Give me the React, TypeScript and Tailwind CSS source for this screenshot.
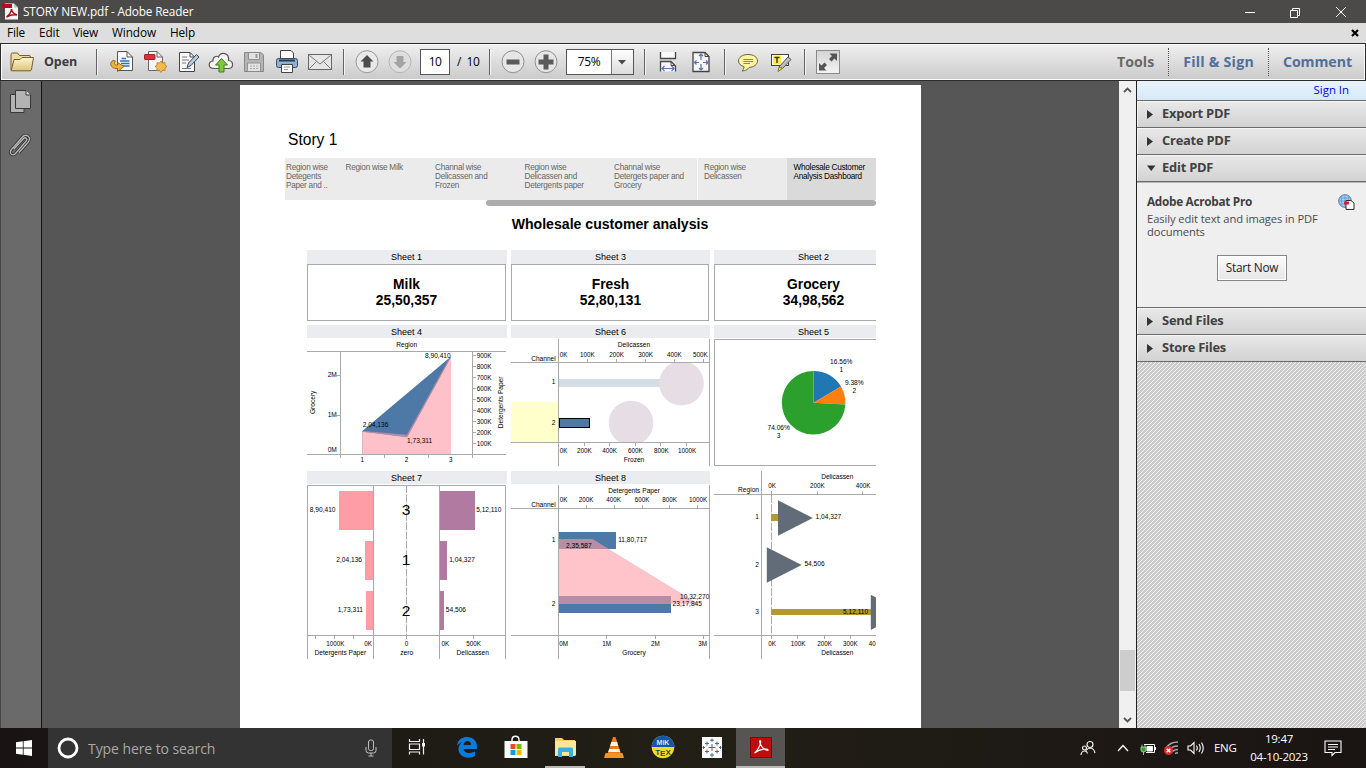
import React from "react";

const UI = "font-['Open_Sans','Noto_Sans',sans-serif]";
const ARIAL = "font-['Liberation_Sans',sans-serif]";
const GRAY = "#a9a9a9";

/* ---------- chart helpers ---------- */
type TProps = { x: number; y: number; children: string; a?: "start" | "middle" | "end"; s?: number; rot?: boolean };
function T({ x, y, children, a = "middle", s = 6.6, rot }: TProps) {
  return (
    <text x={x} y={y} textAnchor={a} fontSize={s} fill="#000" transform={rot ? `rotate(-90 ${x} ${y})` : undefined}>
      {children}
    </text>
  );
}
function L({ d, dash }: { d: string; dash?: string }) {
  return <path d={d} stroke={GRAY} strokeWidth="1" fill="none" strokeDasharray={dash} />;
}
function Axis({ items, y, s = 6.3 }: { items: [number, string][]; y: number; s?: number }) {
  return (
    <>
      {items.map(([x, t]) => (
        <T key={t + x} x={x} y={y} s={s}>{t}</T>
      ))}
    </>
  );
}

function Chart4() {
  const right = ["900K", "800K", "700K", "600K", "500K", "400K", "300K", "200K", "100K"];
  return (
    <svg width="200" height="127" viewBox="307 339 200 127" className="block">
      <path d="M362.3 431L451 356.5V454H362.3Z" fill="#4e79a7" />
      <path d="M362.3 431.5L407 437L451 357V454H362.3Z" fill="#ffc1c9" />
      <path d="M362.3 431.3L407 435.2L450.5 357L407 437Z" fill="#b98ea8" stroke="#b98ea8" strokeWidth="0.6" />
      <L d="M307 351.5H506M307 454.5H506M340.5 351V458M472.5 351V458M384.5 454V458M428.5 454V458M336.5 375.5H340M336.5 415.5H340" />
      {right.map((t, i) => (
        <g key={t}>
          <L d={`M473 ${355 + i * 11}.5H476`} />
          <T x={476.7} y={357.7 + i * 11} a="start" s={6.4}>{t}</T>
        </g>
      ))}
      <T x={406.7} y={347}>Region</T>
      <T x={425} y={357.8} a="start">8,90,410</T>
      <T x={362.7} y={427} a="start">2,04,136</T>
      <T x={407} y={442.8} a="start">1,73,311</T>
      <T x={336.8} y={377.3} a="end">2M</T>
      <T x={336.8} y={417.3} a="end">1M</T>
      <T x={336.8} y={452} a="end">0M</T>
      <Axis y={461.8} items={[[362.3, "1"], [406.5, "2"], [450.7, "3"]]} />
      <T x={315} y={402.3} rot>Grocery</T>
      <T x={502.6} y={402.3} rot>Detergents Paper</T>
    </svg>
  );
}

function Chart6() {
  return (
    <svg width="199" height="127" viewBox="511 339 199 127" className="block">
      <rect x="511" y="402" width="47" height="40" fill="#ffffcc" />
      <rect x="559" y="379" width="108" height="8" fill="#d4dde4" />
      <clipPath id="pane6"><rect x="559" y="363" width="150" height="79" /></clipPath>
      <g clipPath="url(#pane6)" fill="#e6dde5">
        <circle cx="681.5" cy="383.2" r="22.3" />
        <circle cx="631" cy="423" r="22.3" />
      </g>
      <rect x="559.5" y="418.5" width="30" height="9" fill="#4e79a7" stroke="#000" />
      <L d="M558.5 339V466M709.5 339V466M511 362.5H710M511 442.5H710" />
      <L d="M587.5 359V362M616.5 359V362M645.5 359V362M674.5 359V362M703.5 359V362M584.5 443V446M609.5 443V446M635.5 443V446M660.5 443V446M686.5 443V446" />
      <T x={634} y={347}>Delicassen</T>
      <Axis y={357} items={[[563.7, "0K"], [587.3, "100K"], [616.7, "200K"], [645.7, "300K"], [674.3, "400K"], [700.3, "500K"]]} />
      <T x={555.7} y={361} a="end">Channel</T>
      <T x={555.5} y={384} a="end">1</T>
      <T x={555.5} y={425} a="end">2</T>
      <Axis y={453} items={[[563.7, "0K"], [584.3, "200K"], [609.7, "400K"], [635.3, "600K"], [661.3, "800K"], [687, "1000K"]]} />
      <T x={634} y={462}>Frozen</T>
    </svg>
  );
}

function Chart5() {
  const c = [813.6, 402.7];
  const r = 31.8;
  const pt = (f: number) => `${c[0] + r * Math.sin(f * 2 * Math.PI)} ${c[1] - r * Math.cos(f * 2 * Math.PI)}`;
  const slice = (f0: number, f1: number) => `M${c[0]} ${c[1]}L${pt(f0)}A${r} ${r} 0 ${f1 - f0 > 0.5 ? 1 : 0} 1 ${pt(f1)}Z`;
  return (
    <svg width="162" height="127" viewBox="714 339 162 127" className="block">
      <L d="M876 339.5H714.5V465.5H876" />
      <path d={slice(0, 0.1656)} fill="#1f77b4" />
      <path d={slice(0.1656, 0.2594)} fill="#ff7f0e" />
      <path d={slice(0.2594, 0.9999)} fill="#2ca02c" />
      <T x={841.3} y={364}>16.56%</T>
      <T x={841.3} y={371.8}>1</T>
      <T x={854.3} y={385}>9.38%</T>
      <T x={854.3} y={392.8}>2</T>
      <T x={778.7} y={430}>74.06%</T>
      <T x={778.7} y={437.8}>3</T>
    </svg>
  );
}

function Chart7() {
  return (
    <svg width="200" height="174" viewBox="307 485 200 174" className="block">
      <g fill="#ff9da7">
        <rect x="339" y="491" width="34" height="39" />
        <rect x="365" y="541" width="8" height="39" />
        <rect x="366" y="591" width="7" height="39" />
      </g>
      <g fill="#b07aa1">
        <rect x="440" y="491" width="35" height="39" />
        <rect x="440" y="541" width="7" height="39" />
        <rect x="440" y="591" width="4" height="39" />
      </g>
      <L d="M406.5 485V635" dash="8 1.3" />
      <L d="M307.5 659V485.5H505.5V659M373.5 485V659M439.5 485V659M307 635.5H506M315.5 636V639M334.5 636V639M353.5 636V639M406.5 636V639M473.5 636V639" />
      <T x={335.5} y={512} a="end">8,90,410</T>
      <T x={362} y={562} a="end">2,04,136</T>
      <T x={363} y={612} a="end">1,73,311</T>
      <T x={476.2} y={512} a="start">5,12,110</T>
      <T x={449.2} y={562} a="start">1,04,327</T>
      <T x={445.8} y={612} a="start">54,506</T>
      <T x={406} y={514.9} s={15.5}>3</T>
      <T x={406} y={565} s={15.5}>1</T>
      <T x={406} y={616} s={15.5}>2</T>
      <Axis y={646} items={[[335.3, "1000K"], [368, "0K"], [406.5, "0"], [445.3, "0K"], [473.7, "500K"]]} />
      <T x={340.3} y={655}>Detergents Paper</T>
      <T x={406.7} y={655}>zero</T>
      <T x={472.7} y={655}>Delicassen</T>
    </svg>
  );
}

function Chart8() {
  return (
    <svg width="199" height="174" viewBox="511 485 199 174" className="block">
      <rect x="559" y="532" width="57" height="17" fill="#4e79a7" />
      <rect x="559" y="596" width="112" height="17" fill="#4e79a7" />
      <path d="M559 539.5H592.5L698 604H559Z" fill="#ff9da7" fillOpacity="0.6" />
      <path d="M559 539.5H592.5L698 604" fill="none" stroke="#ff9da7" strokeOpacity="0.5" strokeWidth="0.8" />
      <L d="M558.5 485V659M709.5 485V659M511 508.5H710M511 635.5H710" />
      <L d="M586.5 505V508M614.5 505V508M642.5 505V508M669.5 505V508M697.5 505V508M606.5 636V639M655.5 636V639M703.5 636V639" />
      <T x={634} y={493.3}>Detergents Paper</T>
      <Axis y={502} items={[[563.7, "0K"], [586, "200K"], [613.7, "400K"], [642, "600K"], [669.7, "800K"], [698, "1000K"]]} />
      <T x={555.7} y={507} a="end">Channel</T>
      <T x={555.5} y={542} a="end">1</T>
      <T x={555.5} y={606} a="end">2</T>
      <T x={566} y={547.8} a="start">2,35,587</T>
      <T x={618.2} y={542} a="start">11,80,717</T>
      <T x={680} y={599} a="start">10,32,270</T>
      <T x={672.6} y={606} a="start">23,17,845</T>
      <Axis y={646} items={[[563.7, "0M"], [606.7, "1M"], [655.3, "2M"], [702.6, "3M"]]} />
      <T x={634} y={655}>Grocery</T>
    </svg>
  );
}

function Chart9() {
  return (
    <svg width="162" height="188" viewBox="714 471 162 188" className="block">
      <L d="M771.5 495V635" dash="8 1.3" />
      <rect x="771" y="514" width="8" height="7" fill="#b6992d" />
      <rect x="771" y="609" width="100" height="6" fill="#b6992d" />
      <g fill="#616c78">
        <path d="M778 500.3L812.8 518L778 535.7Z" />
        <path d="M766.8 547.3L801.7 565L766.8 582.7Z" />
        <path d="M870.8 594.7L905 612.3L870.8 630Z" />
      </g>
      <L d="M761.5 471V659M714 494.5H876M714 635.5H876M771.5 491V494M817.5 491V494M862.5 491V494M771.5 636V639M797.5 636V639M824.5 636V639M850.5 636V639" />
      <T x={837.3} y={479}>Delicassen</T>
      <Axis y={488} items={[[772, "0K"], [817.3, "200K"], [863, "400K"]]} />
      <T x={759} y={492} a="end">Region</T>
      <T x={759} y={519} a="end">1</T>
      <T x={759} y={567} a="end">2</T>
      <T x={759} y={614} a="end">3</T>
      <T x={815.6} y={519.3} a="start">1,04,327</T>
      <T x={804.4} y={566} a="start">54,506</T>
      <T x={843} y={614} a="start">5,12,110</T>
      <Axis y={646} items={[[772, "0K"], [798, "100K"], [824.5, "200K"], [850.3, "300K"], [872.3, "40"]]} />
      <T x={837.3} y={655}>Delicassen</T>
    </svg>
  );
}

/* ---------- document page ---------- */
function SheetHead({ children, tall }: { children: string; tall?: boolean }) {
  return (
    <div className={`bg-[#ebecf0] overflow-hidden ${tall ? "h-[14px]" : "h-[13px]"}`}>
      <div className="w-[199px] text-center text-[9px] leading-[14px] text-black">{children}</div>
    </div>
  );
}
function Kpi({ head, name, value, open }: { head: string; name: string; value: string; open?: boolean }) {
  return (
    <div className="overflow-hidden">
      <SheetHead tall>{head}</SheetHead>
      <div className={`h-[57px] border-[#a9a9a9] ${open ? "border-y border-l" : "mr-px border"}`}>
        <div className="w-[197px] pt-3 text-center text-[13.8px] font-bold leading-4 text-black">
          <div>{name}</div>
          <div>{value}</div>
        </div>
      </div>
    </div>
  );
}
const tabs: { w: string; lines: string[] }[] = [
  { w: "w-[54px] pl-px", lines: ["Region wise", "Detegents", "Paper and .."] },
  { w: "w-[90px] pl-[6.5px]", lines: ["Region wise Milk"] },
  { w: "w-[89px] pl-[6px]", lines: ["Channal wise", "Delicassen and", "Frozen"] },
  { w: "w-[90px] pl-[6.5px]", lines: ["Region wise", "Delicassen and", "Detergents paper"] },
  { w: "w-[89px] pl-[6px]", lines: ["Channal wise", "Detergets paper and", "Grocery"] },
  { w: "w-[90px] pl-[6px] border-l border-white", lines: ["Region wise", "Delicassen"] },
  { w: "w-[89px] pl-[6.5px] bg-[#dadada] text-black", lines: ["Wholesale Customer", "Analysis Dashboard"] },
];
function Page() {
  return (
    <div className={`mt-1 ml-[198px] w-[681px] h-[643px] shrink-0 bg-white pl-[45px] pt-[46px] ${ARIAL}`}>
      <div className="h-[27px] pl-[3px] text-[15.6px] leading-[18px] text-black">Story 1</div>
      <div className="flex h-[42px] w-[591px] overflow-hidden bg-[#ebebeb] text-[#666]">
        {tabs.map((t, i) => (
          <div key={i} className={`${t.w} shrink-0 whitespace-nowrap pt-[5px] text-[8.2px] leading-[9px] tracking-[-0.25px]`}>
            {t.lines.map((l) => (
              <div key={l}>{l}</div>
            ))}
          </div>
        ))}
      </div>
      <div className="ml-[201px] h-1.5 w-[390px] rounded-full bg-[#adadad]" />
      <div className="ml-[22px] mt-2.5 h-[34px] w-[606px] text-center text-[14.1px] font-bold leading-4 text-black">Wholesale customer analysis</div>
      <div className="ml-[22px] grid w-[569px] grid-cols-[200px_199px_162px] gap-x-1">
        <Kpi head="Sheet 1" name="Milk" value="25,50,357" />
        <Kpi head="Sheet 3" name="Fresh" value="52,80,131" />
        <Kpi head="Sheet 2" name="Grocery" value="34,98,562" open />
        <div className="mt-1"><SheetHead>Sheet 4</SheetHead><div className="pt-px"><Chart4 /></div></div>
        <div className="mt-1"><SheetHead>Sheet 6</SheetHead><div className="pt-px"><Chart6 /></div></div>
        <div className="mt-1"><SheetHead>Sheet 5</SheetHead><div className="pt-px"><Chart5 /></div></div>
        <div className="mt-[5px]"><SheetHead>Sheet 7</SheetHead><div className="pt-px"><Chart7 /></div></div>
        <div className="mt-[5px]"><SheetHead>Sheet 8</SheetHead><div className="pt-px"><Chart8 /></div></div>
        <div className="mt-[5px]"><Chart9 /></div>
      </div>
    </div>
  );
}

/* ---------- toolbar ---------- */
function Sep() {
  return <div className="h-[26px] w-0.5 shrink-0 border-l border-[#636363] bg-[#f4f4f4]" />;
}
function Ico({ children }: { children: React.ReactNode }) {
  return (
    <div className="flex w-[33px] shrink-0 justify-center">
      <svg width="26" height="26" viewBox="0 0 26 26" fill="none">{children}</svg>
    </div>
  );
}
function Toolbar() {
  return (
    <div className="box-border flex h-[38px] shrink-0 items-center border border-[#2b2b2b] bg-linear-to-b from-[#f0f0f0] to-[#cacaca] shadow-[inset_0_0_0_1px_#fafafa]">
      <div className="flex w-[95px] shrink-0 items-center pl-[8px]">
        <svg width="26" height="22" viewBox="0 0 26 22">
          <defs>
            <linearGradient id="fold" x2="0" y2="1"><stop stopColor="#fdf5d4" /><stop offset="1" stopColor="#dfc476" /></linearGradient>
          </defs>
          <path d="M2 19V3.5Q2 2 3.5 2H8.5L10.5 4.5H20Q21.5 4.5 21.5 6V9" fill="#eedda0" stroke="#735f31" />
          <path d="M2.2 19.8L5 8.5H11L13 6.5H24.5L22.5 18.5Q22.2 19.8 21 19.8Z" fill="url(#fold)" stroke="#735f31" strokeLinejoin="round" />
        </svg>
        <span className="ml-[9px] text-[12.5px] font-bold tracking-[-0.1px] text-[#3b3b3b]">Open</span>
      </div>
      <Sep />
      <div className="flex w-[245px] shrink-0 pl-[7.5px]">
        <Ico>
          <path d="M8.5 2.5H18L23.5 8V21.5H8.5Z" fill="#fbfbfb" stroke="#555" />
          <path d="M18 2.5V8H23.5" stroke="#555" />
          <path d="M12.5 9.5H17M11 12H20.500M12 14.500H20.500M14 17H20.500" stroke="#2f6fc4" strokeWidth="1.3" />
          <path d="M4 11.500C-.5 14 2 20 8.500 19.500V22.500L15 17.500L8.500 13.500V16C5 16.500 4.500 14 6.500 12Z" fill="#f2b53a" stroke="#8a5d10" strokeWidth=".9" />
        </Ico>
        <Ico>
          <path d="M6.500 2.500H15L20.500 8V21.500H6.500Z" fill="#f5f5f5" stroke="#666" />
          <path d="M15 2.500V8H20.500" stroke="#666" />
          <rect x="2.500" y="5.500" width="10.500" height="5" rx=".6" fill="#e0303a" stroke="#a91d26" />
          <path d="M19 12L20.600 14.200L23 13.500L22.900 16L25 17.500L22.900 19L23.200 21.500L20.700 21.200L19 23.500L17.300 21.200L14.800 21.500L15.100 19L13 17.500L15.100 16L15 13.500L17.400 14.200Z" fill="#f4bd49" stroke="#a9761c" strokeWidth=".7" />
        </Ico>
        <Ico>
          <path d="M4.500 3.500H15L19.500 8V22.500H4.500Z" fill="#fafafa" stroke="#444" />
          <path d="M15 3.500V8H19.500" stroke="#444" />
          <path d="M7 8H12M7 11H14M7 14H11M7 19.500H16" stroke="#777" />
          <path d="M12 18.500L13.500 14L21.500 5.500L24 8L16 16.500Z" fill="#b7cbe0" stroke="#39495c" />
        </Ico>
        <Ico>
          <path d="M6 19.500C-.5 19.500 0 12 5 12C4.500 7.500 9 6.500 10.500 8C13 2 21.500 4 20.500 11.500C26 12 26 19.500 20 19.500Z" fill="#f4f4f4" stroke="#555" strokeWidth="1.200" />
          <path d="M13.500 9.500L19.500 16H16V23H11V16H7.500Z" fill="#7dcb3c" stroke="#3e7c14" />
        </Ico>
        <Ico>
          <path d="M3.500 3.500H20L22.500 6V22.500H3.500Z" fill="#b4b4b4" stroke="#888" />
          <path d="M7.500 4V10.500H18.500V4M6.500 22V14H19.500V22" fill="#e2e2e2" stroke="#909090" />
          <path d="M14.500 5H16.500V9H14.500Z" fill="#999" />
          <path d="M9 17H17M9 19.500H17" stroke="#aaa" strokeDasharray="2 1" />
        </Ico>
        <Ico>
          <path d="M6.500 10V1.500H17L19.500 4V10Z" fill="#fdfdfd" stroke="#444" />
          <rect x="2.500" y="9.500" width="21" height="9" rx="2" fill="#8db1d4" stroke="#3c4c5e" />
          <path d="M5 11.500H21" stroke="#2c3947" strokeWidth="2" />
          <path d="M7.500 15.500H18.500V23.500H7.500Z" fill="#fdfdfd" stroke="#444" />
          <path d="M10 18H16M10 20.500H14" stroke="#999" />
        </Ico>
        <Ico>
          <rect x="1.500" y="5.500" width="23" height="15" fill="#e6e6e6" stroke="#666" />
          <path d="M2.500 6.500L13 15L23.500 6.500M2.500 19.500L9.500 12.500M23.500 19.500L16.500 12.500" stroke="#777" />
        </Ico>
      </div>
      <Sep />
      <div className="flex w-[75px] shrink-0 pl-[5px]">
        <Ico>
          <circle cx="13" cy="12.700" r="11" fill="#e9e9e9" stroke="#999" />
          <path d="M13 6L19.500 12.500H16.500V18.500H9.500V12.500H6.500Z" fill="#4c4c4c" />
        </Ico>
        <Ico>
          <circle cx="13" cy="12.700" r="11" fill="#dedede" stroke="#b5b5b5" />
          <path d="M13 19.500L19.500 13H16.500V7H9.500V13H6.500Z" fill="#a3a3a3" />
        </Ico>
      </div>
      <div className="flex h-[26px] w-[30px] shrink-0 items-center justify-center border border-[#555] bg-white text-[12px] tracking-[-0.5px] text-black">10</div>
      <span className="w-[39px] shrink-0 whitespace-pre pl-[7px] text-[12px] tracking-[-0.4px] text-black">/  10</span>
      <Sep />
      <div className="flex w-[75px] shrink-0 pl-[5.500px]">
        <Ico>
          <circle cx="13" cy="12.700" r="11" fill="#e6e6e6" stroke="#909090" />
          <path d="M6.500 10.500H19.500V15.500H6.500Z" fill="#5a5a5a" />
        </Ico>
        <Ico>
          <circle cx="13" cy="12.700" r="11" fill="#e6e6e6" stroke="#909090" />
          <path d="M10.500 5.500H15.500V10.500H20.500V15.500H15.500V20.500H10.500V15.500H5.500V10.500H10.500Z" fill="#5a5a5a" />
        </Ico>
      </div>
      <div className="flex h-[26px] w-[68px] shrink-0 border border-[#555] bg-white">
        <span className="flex w-[45px] items-center justify-center border-r border-[#777] text-[12px] tracking-[-0.4px] text-black">75%</span>
        <span className="flex flex-1 items-center justify-center bg-linear-to-b from-white to-[#dcdcdc]">
          <svg width="9" height="5"><path d="M0 0H8L4 4.500Z" fill="#4a4a4a" /></svg>
        </span>
      </div>
      <div className="w-[10px] shrink-0" />
      <Sep />
      <div className="flex w-[78px] shrink-0 pl-[5.500px]">
        <Ico>
          <path d="M5.500 3H20.500V9.500H5.500Z" fill="#fafafa" />
          <path d="M5.500 3V9.500H20.500V3" stroke="#444" strokeWidth="1.300" />
          <path d="M5.500 22.500V12.500H16L20.500 17V22.500" stroke="#444" strokeWidth="1.300" fill="#f6f6f6" />
          <path d="M16 12.500V16.500H20.500" stroke="#444" />
          <path d="M7 19.500H19M9.500 17L7 19.500L9.500 22M16.500 17L19 19.500L16.500 22" stroke="#5b74ad" strokeWidth="1.200" />
        </Ico>
        <Ico>
          <path d="M5 3.500H17L21 7.500V22.500H5Z" fill="#f6f6f6" stroke="#444" strokeWidth="1.300" />
          <path d="M17 3.500V7.500H21" stroke="#444" />
          <path d="M13 5V11M13 15V21M6.500 13.500H11M15 13.500H20M11 7L13 5L15 7M11 19L13 21L15 19M8.500 11.500L6.500 13.500L8.500 15.500M18 11.500L20 13.500L18 15.500" stroke="#5b74ad" strokeWidth="1.200" />
        </Ico>
      </div>
      <Sep />
      <div className="flex w-[78px] shrink-0 pl-[5px]">
        <Ico>
          <path d="M13 5.500C7 5.500 3.500 8.500 3.500 12C3.500 15 6 17 9 17.500C9 20 8 21 7 22C10 22 13 20.500 14 18.500C19 18 22.500 15.500 22.500 12C22.500 8 18.500 5.500 13 5.500Z" fill="#fdf5a0" stroke="#6a6647" />
          <path d="M8.500 10.500H18M8.500 12.500H18M8.500 14.500H15" stroke="#8e884c" />
        </Ico>
        <Ico>
          <rect x="3.500" y="5.500" width="17" height="11" fill="#fff" stroke="#444" />
          <rect x="5" y="6.500" width="8" height="9" fill="#ffef3a" />
          <path d="M6.500 8.500H11.500M9 8.500V14" stroke="#333" strokeWidth="1.400" />
          <path d="M11 18L20 8L23 10.500L14.500 19.500Z" fill="#bdbdbd" stroke="#555" />
          <path d="M11 18L14.500 19.500L10 22.500Z" fill="#efe544" stroke="#7f7a2a" />
        </Ico>
      </div>
      <Sep />
      <div className="ml-[10px] flex h-6 w-6 shrink-0 items-center justify-center border border-[#8a8a8a] bg-linear-to-b from-[#d4d4d4] to-[#f4f4f4]">
        <svg width="22" height="22" viewBox="0 0 22 22" fill="#555">
          <path d="M12.500 2.500H20V10L17.500 7.500L14.500 10.500L12 8L15 5Z" />
          <path d="M9.500 19.500H2V12L4.500 14.500L7.500 11.500L10 14L7 17Z" />
        </svg>
      </div>
      <div className="ml-auto flex h-full items-center pr-[13px] text-[14.2px] font-bold text-[#4f6f9d]">
        <span className="text-[#6b6865]">Tools</span>
        <span className="ml-[14px] h-7 w-px border-l border-dotted border-[#555]" />
        <span className="ml-[14px] tracking-[0.22px]">Fill &amp; Sign</span>
        <span className="ml-[14px] h-7 w-px border-l border-dotted border-[#555]" />
        <span className="ml-[14px] tracking-[-0.07px]">Comment</span>
      </div>
    </div>
  );
}

/* ---------- right panel ---------- */
function Section({ children, open }: { children: string; open?: boolean }) {
  return (
    <div className="flex h-[27px] shrink-0 items-center border-b border-[#6b6b6b] bg-linear-to-b from-[#e9e9e9] to-[#d2d2d2] shadow-[inset_1px_1px_0_#f5f5f5]">
      <svg width="25" height="12" viewBox="0 0 25 12" fill="#333">
        {open ? <path d="M10 3.500H18.500L14.200 9Z" /> : <path d="M10 2L16 6.500L10 11Z" />}
      </svg>
      <span className="text-[12.900px] font-bold tracking-[-0.22px] text-[#414141]">{children}</span>
    </div>
  );
}
function Panel() {
  return (
    <div className="flex w-[230px] shrink-0 flex-col border-l border-[#222] bg-[#efefef]">
      <div className="h-[20px] shrink-0 border-b border-[#6b6b6b] bg-linear-to-b from-[#eaf4fc] to-[#d5e8f8] pr-[17px] text-right text-[11.400px] leading-[18px] text-[#0000e6]">Sign In</div>
      <Section>Export PDF</Section>
      <Section>Create PDF</Section>
      <Section open>Edit PDF</Section>
      <div className="h-[126px] shrink-0 border-b border-t border-[#6b6b6b] border-t-[#b5b5b5] pl-2.5 pt-[10px]">
        <div className="flex h-[19px] justify-between pr-[11px]">
          <span className="text-[11.800px] font-bold leading-4 tracking-[-0.3px] text-[#3f3f3f]">Adobe Acrobat Pro</span>
          <svg className="mt-px" width="17" height="17" viewBox="0 0 17 17" fill="none">
            <circle cx="7" cy="7" r="6.300" fill="#a9cdf0" stroke="#3d78b8" />
            <path d="M7 1V13M1 7H13M2 4H12M2 10H12M4 2C3 5 3 9 4 12M10 2C11 5 11 9 10 12" stroke="#5e97d1" strokeWidth=".7" />
            <path d="M8 6.500H13L16 9V15.500H8Z" fill="#fff" stroke="#333" />
            <rect x="6" y="7.500" width="5" height="3" fill="#d01f2e" />
          </svg>
        </div>
        <div className="whitespace-nowrap text-[11.200px] leading-[13px] tracking-[-0.09px] text-[#4b4b4b]">Easily edit text and images in PDF<br />documents</div>
        <button className="ml-[70px] mt-[17px] h-[26px] w-[70px] border border-[#858585] bg-linear-to-b from-[#fbfbfb] to-[#e6e6e6] text-[11.800px] leading-none tracking-[-0.2px] text-[#222] shadow-[inset_0_0_0_1px_#fff]">Start Now</button>
      </div>
      <Section>Send Files</Section>
      <Section>Store Files</Section>
      <div className="flex-1 bg-[repeating-linear-gradient(135deg,#cbcbcb_0px,#cbcbcb_2px,#f0f0f0_2px,#f0f0f0_2.828px)]" />
    </div>
  );
}

/* ---------- taskbar ---------- */
function TaskApp({ children, active, open }: { children: React.ReactNode; active?: boolean; open?: boolean }) {
  return (
    <div className={`flex h-10 w-[49px] shrink-0 flex-col items-center ${active ? "bg-[#575553]" : ""}`}>
      <svg width="28" height="38" viewBox="0 -5 28 38" fill="none">{children}</svg>
      <div className={`h-0.5 ${active ? "w-full bg-[#b9b9b9]" : open ? "w-[40px] bg-[#b9b9b9]" : ""}`} />
    </div>
  );
}
function Taskbar() {
  return (
    <div className="flex h-10 shrink-0 items-center bg-linear-to-r from-[#191413] via-[#221f16] to-[#1a1413] text-white">
      <div className="flex w-12 shrink-0 justify-center">
        <svg width="16" height="16" viewBox="0 0 16 16" fill="#fff"><path d="M0 2.300L6.800 1.300V7.600H0ZM7.600 1.200L16 0V7.600H7.600ZM0 8.400H6.800V14.700L0 13.700ZM7.600 8.400H16V16L7.600 14.800Z" /></svg>
      </div>
      <div className="flex h-full w-[344px] shrink-0 items-center bg-[#333333] pl-[9px]">
        <svg width="22" height="22" viewBox="0 0 22 22"><circle cx="11" cy="11" r="9" fill="none" stroke="#fff" strokeWidth="2.800" /></svg>
        <span className="ml-[9px] text-[14px] tracking-[-0.08px] text-[#a8a8a8]">Type here to search</span>
        <svg className="ml-auto mr-[14px]" width="14" height="18" viewBox="0 0 14 18" fill="none" stroke="#c0c0c0"><rect x="4.500" y="1" width="5" height="10.500" rx="2" /><path d="M2 8V11.500Q2 14 4.500 14H9.500Q12 14 12 11.500V8M7 14V17M4.500 17H9.500" /></svg>
      </div>
      <div className="ml-px flex">
        <TaskApp>
          <path d="M5.500 6V8.500H15.500V6M5.500 21.500V19H15.500V21.500M5.500 11H15.500V16.500H5.500ZM19.500 6V21.500" stroke="#eee" strokeWidth="1.200" />
          <rect x="18" y="10" width="3" height="3.500" fill="#eee" />
        </TaskApp>
        <TaskApp>
          <path d="M4 13C4.500 6.500 9.500 4 14 4C20 4 24 8 24 13.500V16H10.500C11 19.500 15 21.500 22 18.500V23C14 27 5.500 23.500 5.500 16C5.500 13 7 10.500 9.500 9C7.500 9.500 5.500 11 4 13ZM10.600 12H18C18 9.500 16.500 8 14.500 8C12.500 8 11 9.500 10.600 12Z" fill="#0a7bdb" fillRule="evenodd" />
        </TaskApp>
        <TaskApp>
          <path d="M10 8V7C10 2 17 2 17 7V8" stroke="#fff" strokeWidth="1.400" />
          <path d="M2.500 8H25.500V25H2.500Z" fill="#fff" />
          <path d="M8.500 11H13.500V16H8.500Z" fill="#e84c22" /><path d="M14.500 11H19.500V16H14.500Z" fill="#7db700" /><path d="M8.500 17H13.500V22H8.500Z" fill="#00a0e8" /><path d="M14.500 17H19.500V22H14.500Z" fill="#fcb400" />
        </TaskApp>
        <TaskApp open>
          <path d="M4 5H11L13 7H24V23H4Z" fill="#f3cf66" /><path d="M4 8H25V22.500H4Z" fill="#fce79b" />
          <path d="M7 24V16Q7 14.500 8.500 14.500H20.500Q22 14.500 22 16V24H18V19H11V24Z" fill="#3aaee6" />
        </TaskApp>
        <TaskApp>
          <path d="M13 4H15.500L21 21H7.500Z" fill="#ef7d12" /><path d="M11.300 9H17.100L18.300 13H10.100Z" fill="#f5f5f5" /><path d="M9.200 16H19.300L20.200 19H8.200Z" fill="#f5f5f5" /><path d="M5.500 20H22.500L24 25H4Z" fill="#f49225" />
        </TaskApp>
        <TaskApp>
          <circle cx="14" cy="14" r="11.300" fill="#ffd91c" /><path d="M2.700 14A11.300 11.300 0 0 1 25.300 14Z" fill="#1456a8" />
          <text x="14" y="12" textAnchor="middle" fontSize="7" fontWeight="bold" fill="#d9e4ef" fontFamily="Liberation Sans">MiK</text>
          <text x="14" y="21.500" textAnchor="middle" fontSize="8" fontWeight="bold" fill="#28466e" fontFamily="Liberation Sans">T<tspan dy="1.200">E</tspan><tspan dy="-1.200">X</tspan></text>
        </TaskApp>
        <TaskApp>
          <rect x="4" y="4" width="20" height="21" fill="#fbfbfb" />
          <path d="M14 11V18M10.500 14.500H17.500M14 5.500V9M12 7.200H16M14 20V24M12 22H16M9 8.500V12.500M7 10.500H11M19 8.500V12.500M17 10.500H21M9 16.500V20.500M7 18.500H11M19 16.500V20.500M17 18.500H21M5.500 13V16M4.500 14.500H7M22.500 13V16M21 14.500H23.500" stroke="#456d91" />
        </TaskApp>
        <TaskApp active>
          <rect x="3.500" y="4.500" width="21" height="20" fill="#c00c0c" stroke="#7a0a0a" />
          <path d="M7.500 20C10 18.500 13.500 12.500 13.700 9C13.800 7 12.500 7.200 12.700 9C13 12.500 17 17 20.500 17.500C21.500 17.500 21 16 19.500 16C15.500 15.800 10.500 17.500 7.500 20Z" stroke="#fff" strokeWidth="1.200" />
        </TaskApp>
      </div>
      <div className="ml-auto flex h-full shrink-0 items-center">
        <svg width="16" height="17" viewBox="0 0 16 17" fill="none" stroke="#eee" strokeWidth="1.200"><circle cx="10" cy="4.500" r="3" /><circle cx="4.500" cy="8" r="2" /><path d="M1 15Q1.500 11 4.500 11Q7 11 7.500 13.500M6 10.500Q8 8 10.500 8Q14 8.500 15 13" /></svg>
        <svg className="ml-[21px]" width="12" height="8" viewBox="0 0 12 8" fill="none" stroke="#fff" strokeWidth="1.300"><path d="M1 7L6 1.500L11 7" /></svg>
        <svg className="ml-[11px]" width="16" height="15" viewBox="0 0 16 15" fill="none" stroke="#fff"><path d="M4 3.500H14.500V11.500H6M15.500 6V9" /><path d="M7 5.500H12.500V10H7Z" fill="#fff" /><path d="M1 6H6V9Q6 11 3.500 11Q1 11 1 9ZM2 3.500V6M5 3.500V6M3.500 11V14" fill="#3a9b35" stroke="#b8e6b1" strokeWidth=".8" /></svg>
        <svg className="ml-[7px]" width="17" height="16" viewBox="0 0 17 16" fill="none" stroke="#a5a5a5" strokeWidth="1.400"><path d="M3 8Q7 2 15 2M6 10Q9 6 15 6M9 12Q11 9.500 15 9.500M12 13.500L15 12.500" /><circle cx="5.500" cy="10.500" r="4.500" fill="#d92d2d" stroke="none" /><path d="M3.700 8.700L7.300 12.300M7.300 8.700L3.700 12.300" stroke="#fff" /></svg>
        <svg className="ml-[7px]" width="18" height="14" viewBox="0 0 18 14" fill="none" stroke="#fff" strokeWidth="1.100"><path d="M1 5H3.500L7 1.500V12.500L3.500 9H1ZM9.500 4.500Q11 7 9.500 9.500M12 3Q14.500 7 12 11M14.500 1.500Q18 7 14.500 12.500" /></svg>
        <span className="ml-[9px] w-[24px] text-[11.500px] tracking-[-0.3px]">ENG</span>
        <div className="ml-[10px] w-[62px] text-center text-[11.500px] leading-[18px] tracking-[-0.250px]">
          <div>19:47</div>
          <div>04-10-2023</div>
        </div>
        <svg className="ml-[14px] mr-[24px]" width="18" height="17" viewBox="0 0 18 17" fill="none" stroke="#fff" strokeWidth="1.100"><path d="M1 1H17V12.500H11L8 15.500V12.500H1ZM4 4.500H14M4 7H14M4 9.500H11" /></svg>
      </div>
    </div>
  );
}

export default function App() {
  return (
    <div className={`flex h-[768px] w-[1366px] flex-col overflow-hidden bg-[#4b4a48] ${UI}`}>
      <div className="flex h-[23px] shrink-0 items-center text-white">
        <svg className="ml-[2px]" width="17" height="17" viewBox="0 0 17 17"><path d="M3 .5H12L16 4.500V16.500H3Z" fill="#f4f4f4" /><path d="M12 .5V4.500H16Z" fill="#bbb" /><path d="M0 1H10V5H0Z" fill="#b01020" /><path d="M4.500 14C7 12 9.500 8.500 9.500 6C9.500 8.500 12.500 11.500 15 12C12 11.500 8 12 4.500 14Z" fill="none" stroke="#b01020" strokeWidth="1.500" /></svg>
        <span className="ml-[4px] text-[11.800px] tracking-[-0.15px]">STORY NEW.pdf - Adobe Reader</span>
        <svg className="ml-auto mr-[18px]" width="104" height="14" viewBox="0 0 104 14" fill="none" stroke="#fff"><path d="M1 7.500H11" /><path d="M46.500 5.500H53.500V12.500H46.500ZM48.500 5V3.500H55.500V10.500H54" /><path d="M92 2L102 12M102 2L92 12" /></svg>
      </div>
      <div className="flex h-[20px] shrink-0 items-center bg-[#dedede] pl-[7px] text-[11.800px] text-black">
        <span className="w-[32px] tracking-[-0.2px]">File</span>
        <span className="w-[34px] tracking-[-0.1px]">Edit</span>
        <span className="w-[39px] tracking-[-0.2px]">View</span>
        <span className="w-[58px] tracking-[-0.1px]">Window</span>
        <span className="tracking-[-0.1px]">Help</span>
        <svg className="ml-auto mr-[7px]" width="8" height="8" viewBox="0 0 8 8"><path d="M1 1L7 7M7 1L1 7" stroke="#000" strokeWidth="2.200" /></svg>
      </div>
      <Toolbar />
      <div className="flex min-h-0 flex-1">
        <div className="flex w-[42px] shrink-0 flex-col items-center border-l border-r border-l-[#444] border-r-[#111] bg-[#6a6a6a] pr-[3px] pt-[8px]">
          <svg width="24" height="25" viewBox="0 0 24 25" fill="#b3b3b3" stroke="#383838"><path d="M2.500 5.500H16V23.500H2.500Z" /><path d="M7.500 1.500H18L22.500 6V19.500H7.500Z" /><path d="M18 1.500V6H22.500" fill="#ddd" /></svg>
          <svg className="mt-[18px]" width="24" height="26" viewBox="0 0 24 26" fill="none"><path d="M6 17L15.500 6.500C17.500 4.500 20 7 18.300 9L7.500 21.500C4.500 24.500 .500 21.500 3.500 17.500L14 5.500C18.500 .500 24 5.500 20 10.500L11 20.500" stroke="#333" strokeWidth="3" /><path d="M6 17L15.500 6.500C17.500 4.500 20 7 18.300 9L7.500 21.500C4.500 24.500 .500 21.500 3.500 17.500L14 5.500C18.500 .500 24 5.500 20 10.500L11 20.500" stroke="#b8b8b8" strokeWidth="1.300" /></svg>
        </div>
        <div className="flex w-[1077px] shrink-0 overflow-hidden bg-[#565656]"><Page /></div>
        <div className="flex w-[17px] shrink-0 flex-col items-center bg-[#f0f0f0] pt-[6px]">
          <svg width="9" height="6" viewBox="0 0 9 6" fill="none" stroke="#555" strokeWidth="1.800"><path d="M1 5L4.500 1.500L8 5" /></svg>
          <div className="mt-[557px] h-[41px] w-[15px] bg-[#cdcdcd]" />
          <svg className="mt-[26px]" width="9" height="6" viewBox="0 0 9 6" fill="none" stroke="#555" strokeWidth="1.800"><path d="M1 1L4.500 4.500L8 1" /></svg>
        </div>
        <Panel />
      </div>
      <Taskbar />
    </div>
  );
}
